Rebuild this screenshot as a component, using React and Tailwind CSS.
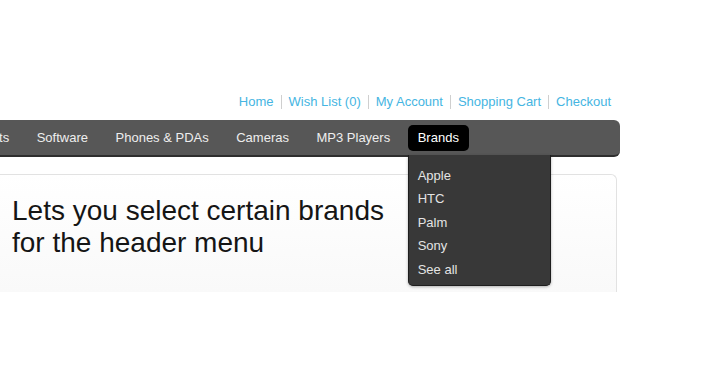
const topLinks = ["Home", "Wish List (0)", "My Account", "Shopping Cart", "Checkout"];
const menu = ["Tablets", "Software", "Phones & PDAs", "Cameras", "MP3 Players"];
const brands = ["Apple", "HTC", "Palm", "Sony", "See all"];

export default function App() {
  return (
    <div className="h-[380px] w-[710px] overflow-hidden bg-white font-['Liberation_Sans',Arial,sans-serif]">
      <div className="ml-[-80px] w-[700px] pt-[94px]">
        <div className="flex items-center justify-end pr-[9px] text-[13px] leading-[16px] text-[#45b5e2]">
          {topLinks.map((link, i) => (
            <div key={link} className="flex items-center">
              {i > 0 ? <span className="mx-[7px] h-[14px] w-px bg-[#cfcfcf]" /> : null}
              <span>{link}</span>
            </div>
          ))}
        </div>

        <div className="relative mt-[10px] flex h-[37px] items-center gap-[7.5px] rounded-r-[6px] border-b-2 border-[#2e2e2e] bg-[#575757] pl-[38px] text-[13px] text-[#eeeeee]">
          {menu.map((item) => (
            <div key={item} className="whitespace-nowrap px-[10px] leading-[26px]">
              {item}
            </div>
          ))}
          <div className="relative">
            <div className="rounded-[5px] bg-black px-[10px] leading-[26px] text-white">
              Brands
            </div>
            <div className="absolute left-0 top-[30px] z-10 flex w-[143px] flex-col rounded-b-[5px] border border-t-0 border-[#1e1e1e] bg-[#383838] pb-[4px] pt-[9px] text-[13px] text-[#e4e4e4] shadow-[0_1px_3px_rgba(0,0,0,0.3)]">
              {brands.map((b) => (
                <div key={b} className="pl-[9px] leading-[23.5px]">
                  {b}
                </div>
              ))}
            </div>
          </div>
        </div>

        <div className="mr-[3px] mt-[17px] h-[118px] rounded-tr-[6px] border border-b-0 border-[#e2e2e2] bg-gradient-to-b from-white to-[#f9f9f9] pl-[91px] pt-[20px]">
          <p className="text-[28px] leading-[32px] text-[#151515]">
            Lets you select certain brands
            <br />
            for the header menu
          </p>
        </div>
      </div>
    </div>
  );
}
